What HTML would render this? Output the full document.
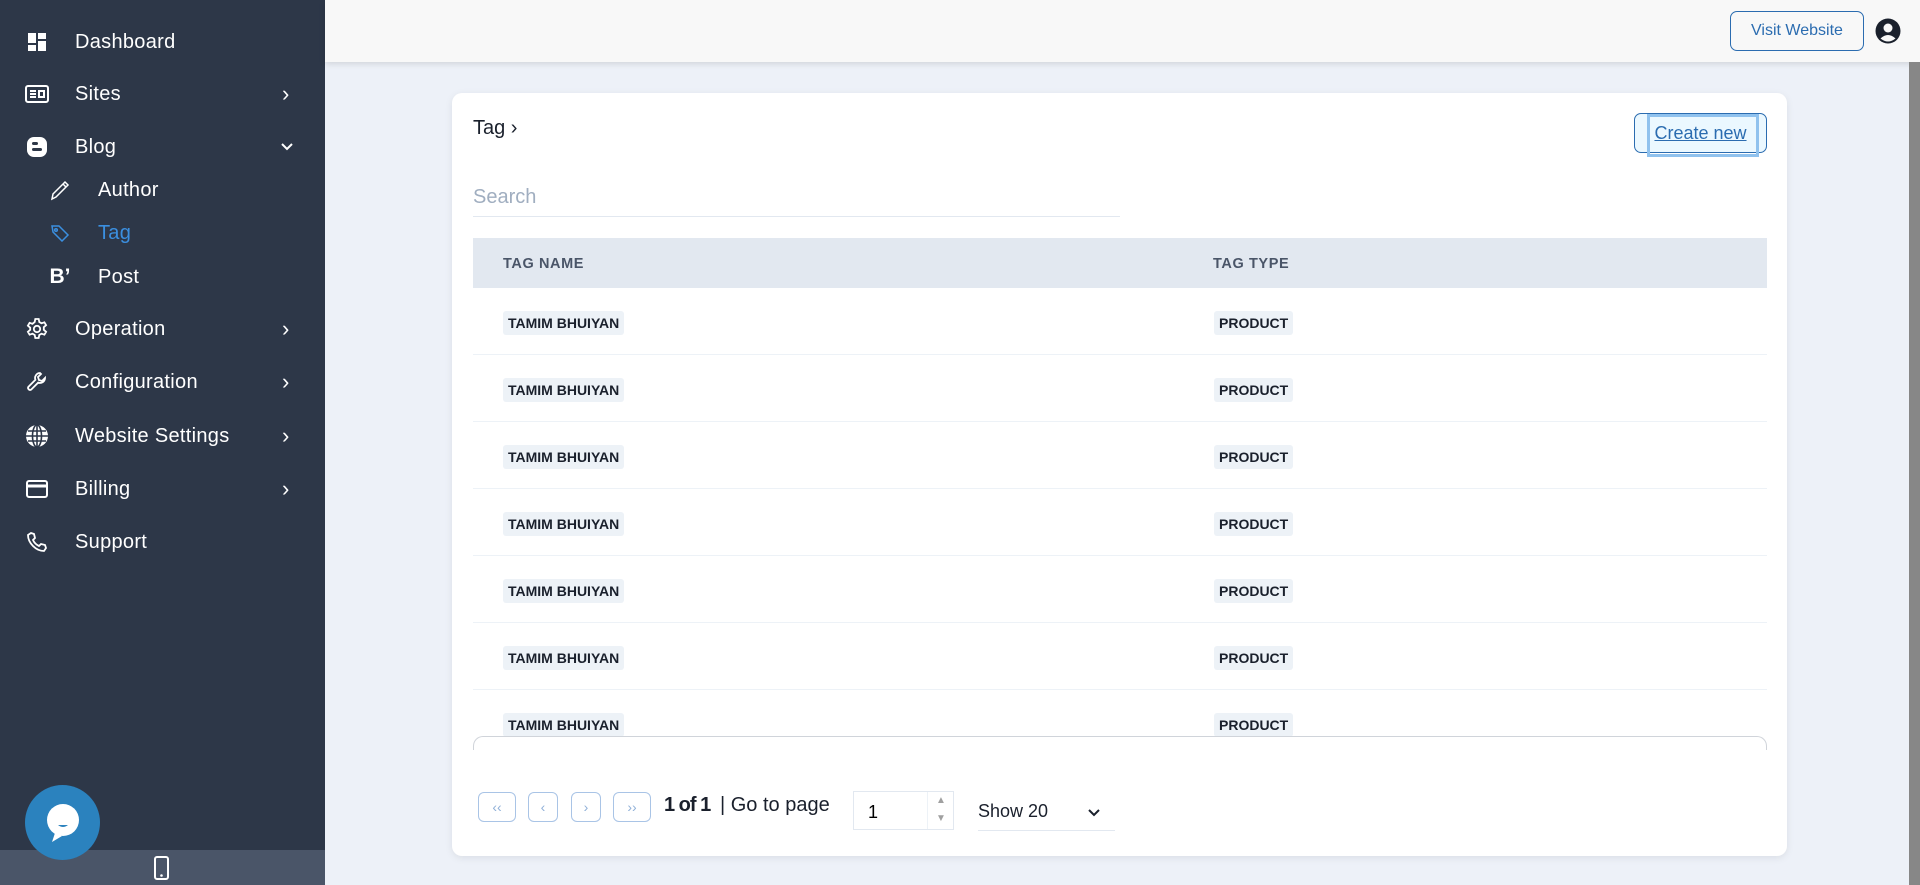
<!DOCTYPE html>
<html><head><meta charset="utf-8"><style>
*{box-sizing:border-box;margin:0;padding:0}
body{width:1920px;height:885px;overflow:hidden;background:#edf1f8;font-family:"Liberation Sans",sans-serif;position:relative}
.sb{position:absolute;left:0;top:0;width:325px;height:885px;background:#2d3748;color:#fff}
.it{position:absolute;left:0;width:325px;height:30px;display:flex;align-items:center;font-size:20px}
.it .ic{position:absolute;left:25px;width:24px;height:24px;display:flex;align-items:center;justify-content:center}
.it .tx{position:absolute;left:75px;letter-spacing:.3px}
.it.sub .ic{left:48px}
.it.sub .tx{left:98px}
.it .ch{position:absolute;left:282px;top:2px;font-size:22px}
.bot{position:absolute;left:0;top:850px;width:325px;height:35px;background:#4a5568}
.chat{position:absolute;left:25px;top:785px;width:75px;height:75px;border-radius:50%;background:#2b82be}
.hdr{position:absolute;left:325px;top:0;width:1595px;height:62px;background:#f8f8f8;box-shadow:0 2px 6px rgba(0,0,0,.12)}
.vw{position:absolute;left:1405px;top:11px;width:134px;height:40px;border:1.5px solid #2b6cb0;border-radius:7px;color:#2b6cb0;font-size:16px;display:flex;align-items:center;justify-content:center}
.scroll{position:absolute;left:1909px;top:62px;width:11px;height:823px;background:#878787}
.card{position:absolute;left:452px;top:93px;width:1335px;height:763px;background:#fff;border-radius:10px;box-shadow:0 2px 8px rgba(0,0,0,.08)}
.title{position:absolute;left:21px;top:24px;font-size:20px;color:#1a202c}
.cn{position:absolute;left:1182px;top:20px;width:133px;height:40px;border:1.5px solid #2b6cb0;border-radius:7px;background:#ebf8ff;color:#2b6cb0;font-size:18px;display:flex;align-items:center;justify-content:center;text-decoration:underline}
.cn::after{content:"";position:absolute;left:12px;top:0;width:106px;height:37px;border:3px solid #90c2ee}
.search{position:absolute;left:21px;top:86px;width:647px;height:38px;border-bottom:1.5px solid #e2e8f0;font-size:20px;color:#a0aec0;padding-top:7px}
.th{position:absolute;left:21px;top:145px;width:1294px;height:50px;background:#e2e8f0;font-size:14.5px;font-weight:bold;color:#4a5568;letter-spacing:.6px}
.th span{position:absolute;top:18px}
.row{position:absolute;left:21px;width:1294px;height:67px;border-bottom:1.5px solid #edf2f7}
.bd{position:absolute;top:23px;background:#edf2f7;font-size:14px;font-weight:bold;color:#1a202c;padding:4px 5px;border-radius:3px}
.sline{position:absolute;left:21px;top:643px;width:1294px;height:14px;border:1.5px solid #d0d4da;border-bottom:none;border-radius:10px 10px 0 0}
.pb{position:absolute;top:699px;height:30px;border:1.5px solid #a9c4e6;border-radius:6px;color:#90b0d8;font-size:14px;display:flex;align-items:center;justify-content:center}
.ptx{position:absolute;top:701px;font-size:20px;color:#1a202c}
.inp{position:absolute;left:401px;top:698px;width:101px;height:39px;border:1px solid #e2e8f0;font-size:18px;padding:10px 0 0 14px}
.sel{position:absolute;left:526px;top:700px;width:137px;height:38px;border-bottom:1px solid #e2e8f0;font-size:18px;padding-top:8px;color:#1a202c}
</style></head><body>
<div class="sb">
 <div class="it" style="top:27px"><div class="ic"><svg width="20" height="20" viewBox="0 0 20 20" fill="#fff"><rect x="1" y="1" width="8" height="10"/><rect x="11" y="1" width="8" height="6"/><rect x="1" y="13" width="8" height="6"/><rect x="11" y="9" width="8" height="10"/></svg></div><span class="tx">Dashboard</span></div>
 <div class="it" style="top:79px"><div class="ic"><svg width="24" height="20" viewBox="0 0 24 20" fill="none" stroke="#fff" stroke-width="2"><rect x="1" y="2" width="22" height="16" rx="2"/><path d="M5 7h6M5 10h6M5 13h6M14 7h5v6h-5z"/></svg></div><span class="tx">Sites</span><span class="ch">›</span></div>
 <div class="it" style="top:132px"><div class="ic"><svg width="22" height="22" viewBox="0 0 22 22"><rect x="1" y="1" width="20" height="20" rx="7" fill="#fff"/><rect x="6" y="6" width="6" height="3" rx="1.5" fill="#2d3748"/><rect x="6" y="12" width="10" height="3" rx="1.5" fill="#2d3748"/></svg></div><span class="tx">Blog</span><svg style="position:absolute;left:281px;top:11px" width="12" height="8" viewBox="0 0 12 8"><path d="M1 1l5 5 5-5" fill="none" stroke="#fff" stroke-width="2"/></svg></div>
 <div class="it sub" style="top:175px"><div class="ic"><svg width="22" height="22" viewBox="0 0 22 22" fill="none" stroke="#fff" stroke-width="1.5"><path d="M3 20l1-5L16 3l3 3L7 18z M14 5l3 3"/></svg></div><span class="tx">Author</span></div>
 <div class="it sub" style="top:218px;color:#3b8fe0"><div class="ic"><svg width="20" height="18" viewBox="0 0 20 18" fill="none" stroke="#3b8fe0" stroke-width="1.5"><path d="M2 2h7l9 9-6 6-9-9z"/><circle cx="6" cy="6" r="1.3"/></svg></div><span class="tx">Tag</span></div>
 <div class="it sub" style="top:262px"><div class="ic" style="font-weight:bold;font-size:21px">B’</div><span class="tx">Post</span></div>
 <div class="it" style="top:314px"><div class="ic"><svg width="24" height="24" viewBox="0 0 24 24" fill="none" stroke="#fff" stroke-width="1.8"><path d="M10.3 2h3.4l.6 3 2.2 1.3 2.9-1 1.7 2.9-2.3 2v2.6l2.3 2-1.7 2.9-2.9-1-2.2 1.3-.6 3h-3.4l-.6-3-2.2-1.3-2.9 1-1.7-2.9 2.3-2V10.7l-2.3-2 1.7-2.9 2.9 1L9.7 5z"/><circle cx="12" cy="12" r="3.2"/></svg></div><span class="tx">Operation</span><span class="ch">›</span></div>
 <div class="it" style="top:367px"><div class="ic"><svg width="22" height="22" viewBox="0 0 22 22" fill="none" stroke="#fff" stroke-width="1.8"><path d="M14 2a5 5 0 0 0-4.6 6.8L2.5 15.7a2 2 0 0 0 2.8 2.8l6.9-6.9A5 5 0 0 0 19 7l-3 3-3-1-1-3 3-3z"/></svg></div><span class="tx">Configuration</span><span class="ch">›</span></div>
 <div class="it" style="top:421px"><div class="ic"><svg width="24" height="24" viewBox="0 0 24 24"><circle cx="12" cy="12" r="11" fill="#fff"/><path d="M1 12h22M12 1v22M3 7h18M3 17h18" stroke="#2d3748" stroke-width="1.6"/><ellipse cx="12" cy="12" rx="4.5" ry="11" fill="none" stroke="#2d3748" stroke-width="1.6"/></svg></div><span class="tx">Website Settings</span><span class="ch">›</span></div>
 <div class="it" style="top:474px"><div class="ic"><svg width="22" height="18" viewBox="0 0 22 18" fill="none" stroke="#fff" stroke-width="2"><rect x="1" y="1" width="20" height="16" rx="2"/><path d="M1 6h20" stroke-width="3"/></svg></div><span class="tx">Billing</span><span class="ch">›</span></div>
 <div class="it" style="top:527px"><div class="ic"><svg width="22" height="22" viewBox="0 0 22 22" fill="none" stroke="#fff" stroke-width="1.8"><path d="M5 2l3 1 1 4-2 2a12 12 0 0 0 6 6l2-2 4 1 1 3-2 3C10 20 2 12 2 4z"/></svg></div><span class="tx">Support</span></div>
 <div class="bot"><svg style="position:absolute;left:154px;top:6px" width="15" height="24" viewBox="0 0 15 24"><rect x="1" y="1" width="13" height="22" rx="2" fill="none" stroke="#fff" stroke-width="2"/><circle cx="7.5" cy="19.5" r="1.3" fill="#fff"/></svg></div>
 <div class="chat"><svg style="position:absolute;left:20px;top:18px" width="36" height="40" viewBox="0 0 36 40"><circle cx="18" cy="17" r="16" fill="#fff"/><path d="M10 30l-3 9 10-6z" fill="#fff"/><path d="M13 22q5 4 10 0z" fill="#2b82be"/></svg></div>
</div>
<div class="hdr"><div class="vw">Visit Website</div>
<svg style="position:absolute;left:1550px;top:18px" width="26" height="26" viewBox="0 0 26 26"><circle cx="13" cy="13" r="12.5" fill="#1a202c"/><circle cx="13" cy="10" r="4.5" fill="#f8f8f8"/><path d="M5.5 20.5q7.5-7 15 0q-7.5 6-15 0z" fill="#f8f8f8"/></svg></div>
<div class="scroll"></div>
<div class="card">
 <div class="title">Tag ›</div>
 <div class="cn">Create new</div>
 <div class="search">Search</div>
 <div class="th"><span style="left:30px">TAG NAME</span><span style="left:740px">TAG TYPE</span></div>
 <div class="row" style="top:195px"><span class="bd" style="left:30px">TAMIM BHUIYAN</span><span class="bd" style="left:741px">PRODUCT</span></div>
 <div class="row" style="top:262px"><span class="bd" style="left:30px">TAMIM BHUIYAN</span><span class="bd" style="left:741px">PRODUCT</span></div>
 <div class="row" style="top:329px"><span class="bd" style="left:30px">TAMIM BHUIYAN</span><span class="bd" style="left:741px">PRODUCT</span></div>
 <div class="row" style="top:396px"><span class="bd" style="left:30px">TAMIM BHUIYAN</span><span class="bd" style="left:741px">PRODUCT</span></div>
 <div class="row" style="top:463px"><span class="bd" style="left:30px">TAMIM BHUIYAN</span><span class="bd" style="left:741px">PRODUCT</span></div>
 <div class="row" style="top:530px"><span class="bd" style="left:30px">TAMIM BHUIYAN</span><span class="bd" style="left:741px">PRODUCT</span></div>
 <div class="row" style="top:597px;height:46px;border:none;overflow:hidden"><span class="bd" style="left:30px">TAMIM BHUIYAN</span><span class="bd" style="left:741px">PRODUCT</span></div>
 <div class="sline"></div>
 <div class="pb" style="left:26px;width:38px">‹‹</div>
 <div class="pb" style="left:76px;width:30px">‹</div>
 <div class="pb" style="left:119px;width:30px">›</div>
 <div class="pb" style="left:161px;width:38px">››</div>
 <div class="ptx" style="left:212px;font-weight:bold;letter-spacing:-1px">1 of 1</div>
 <div class="ptx" style="left:268px">| Go to page</div>
 <div class="inp">1<div style="position:absolute;left:73px;top:0;width:27px;height:37px;border-left:1px solid #edf2f7;color:#a0a0a0;font-size:10px;text-align:center;line-height:18px">▲<br>▼</div></div>
 <div class="sel">Show 20<svg style="position:absolute;left:110px;top:16px" width="12" height="8" viewBox="0 0 12 8"><path d="M1 1l5 5 5-5" fill="none" stroke="#1a202c" stroke-width="2"/></svg></div>
</div>
</body></html>
